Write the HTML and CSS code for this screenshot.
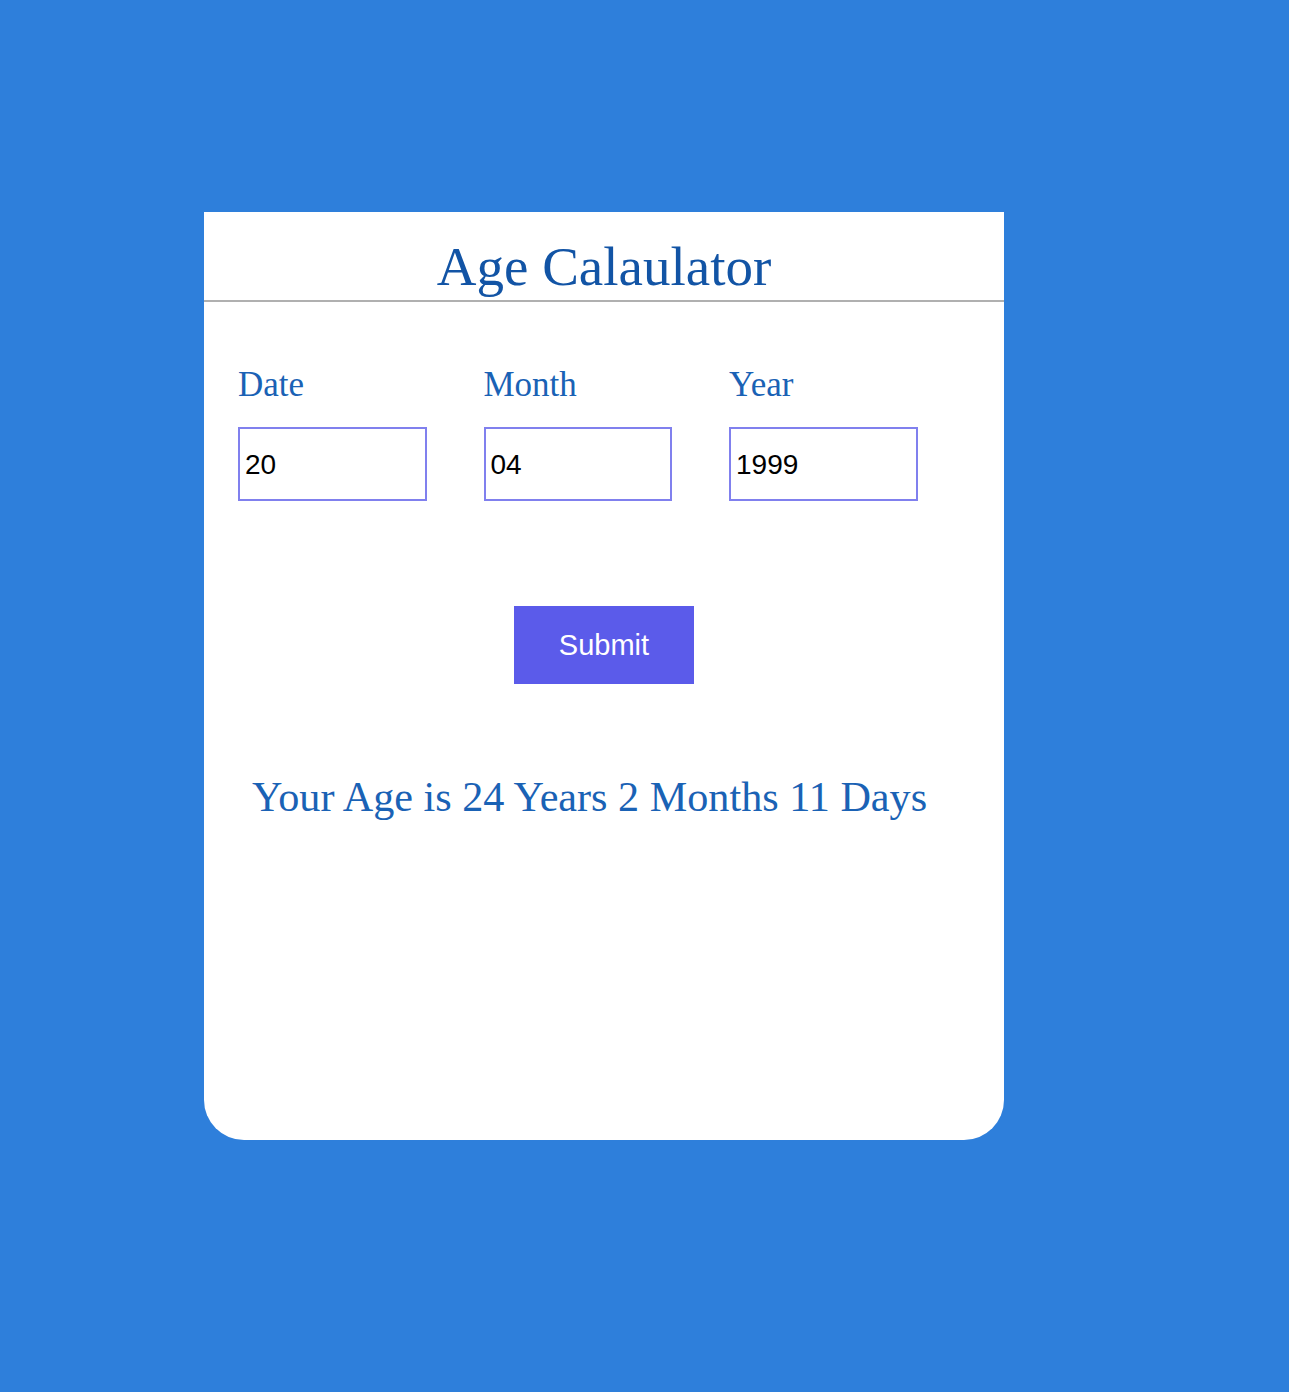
FILE: index.html
```html
<!DOCTYPE html>
<html lang="en">
<head>
    <meta charset="UTF-8">
    <meta name="viewport" content="width=device-width, initial-scale=1.0">
    <title>Age Calaulator</title>
    <link rel="stylesheet" href="styles.css">
</head>
<body>
    <div class="card">
        <h1 class="title">Age Calaulator</h1>

        <form class="fields" id="ageForm">
            <div class="field">
                <label for="day">Date</label>
                <input type="text" id="day" value="20">
            </div>
            <div class="field">
                <label for="month">Month</label>
                <input type="text" id="month" value="04">
            </div>
            <div class="field">
                <label for="year">Year</label>
                <input type="text" id="year" value="1999">
            </div>
        </form>

        <div class="actions">
            <button type="submit" form="ageForm">Submit</button>
        </div>

        <p class="result">Your Age is 24 Years 2 Months 11 Days</p>
    </div>
</body>
</html>
```

FILE: styles.css
```css
body {
    margin: 0;
    padding: 212px 0 0 204px;
    min-height: 1392px;
    box-sizing: border-box;
    background-color: #2e7fdb;
    font-family: "Liberation Serif", "Times New Roman", serif;
}

.card {
    width: 800px;
    height: 928px;
    background-color: #ffffff;
    border-radius: 0 0 40px 40px;
}

.title {
    margin: 0;
    padding: 23px 0 2px;
    line-height: 63px;
    font-size: 55px;
    font-weight: normal;
    text-align: center;
    color: #1254a5;
    border-bottom: 2px solid #b0b0b0;
}

.fields {
    display: flex;
    gap: 57px;
    margin: 0;
    padding: 63px 0 0 34px;
}

.field {
    display: flex;
    flex-direction: column;
    width: 188.5px;
}

label {
    font-size: 35px;
    line-height: 40px;
    color: #1a62b5;
    margin-bottom: 22px;
}

input {
    box-sizing: border-box;
    width: 188.5px;
    height: 74px;
    padding: 1px 5px 0;
    border: 2px solid #8080ee;
    border-radius: 0;
    outline: none;
    font-family: "Liberation Sans", Arial, sans-serif;
    font-size: 28px;
    color: #000000;
}

.actions {
    display: flex;
    justify-content: center;
    padding-top: 105px;
}

button {
    width: 180px;
    height: 78px;
    border: none;
    background-color: #5b5bea;
    color: #ffffff;
    font-family: "Liberation Sans", Arial, sans-serif;
    font-size: 29px;
    cursor: pointer;
}

button:hover {
    background-color: #4a4ad8;
}

.result {
    margin: 89px 0 0;
    padding-left: 48px;
    font-size: 42.2px;
    line-height: 48px;
    color: #1a62b5;
}
```
